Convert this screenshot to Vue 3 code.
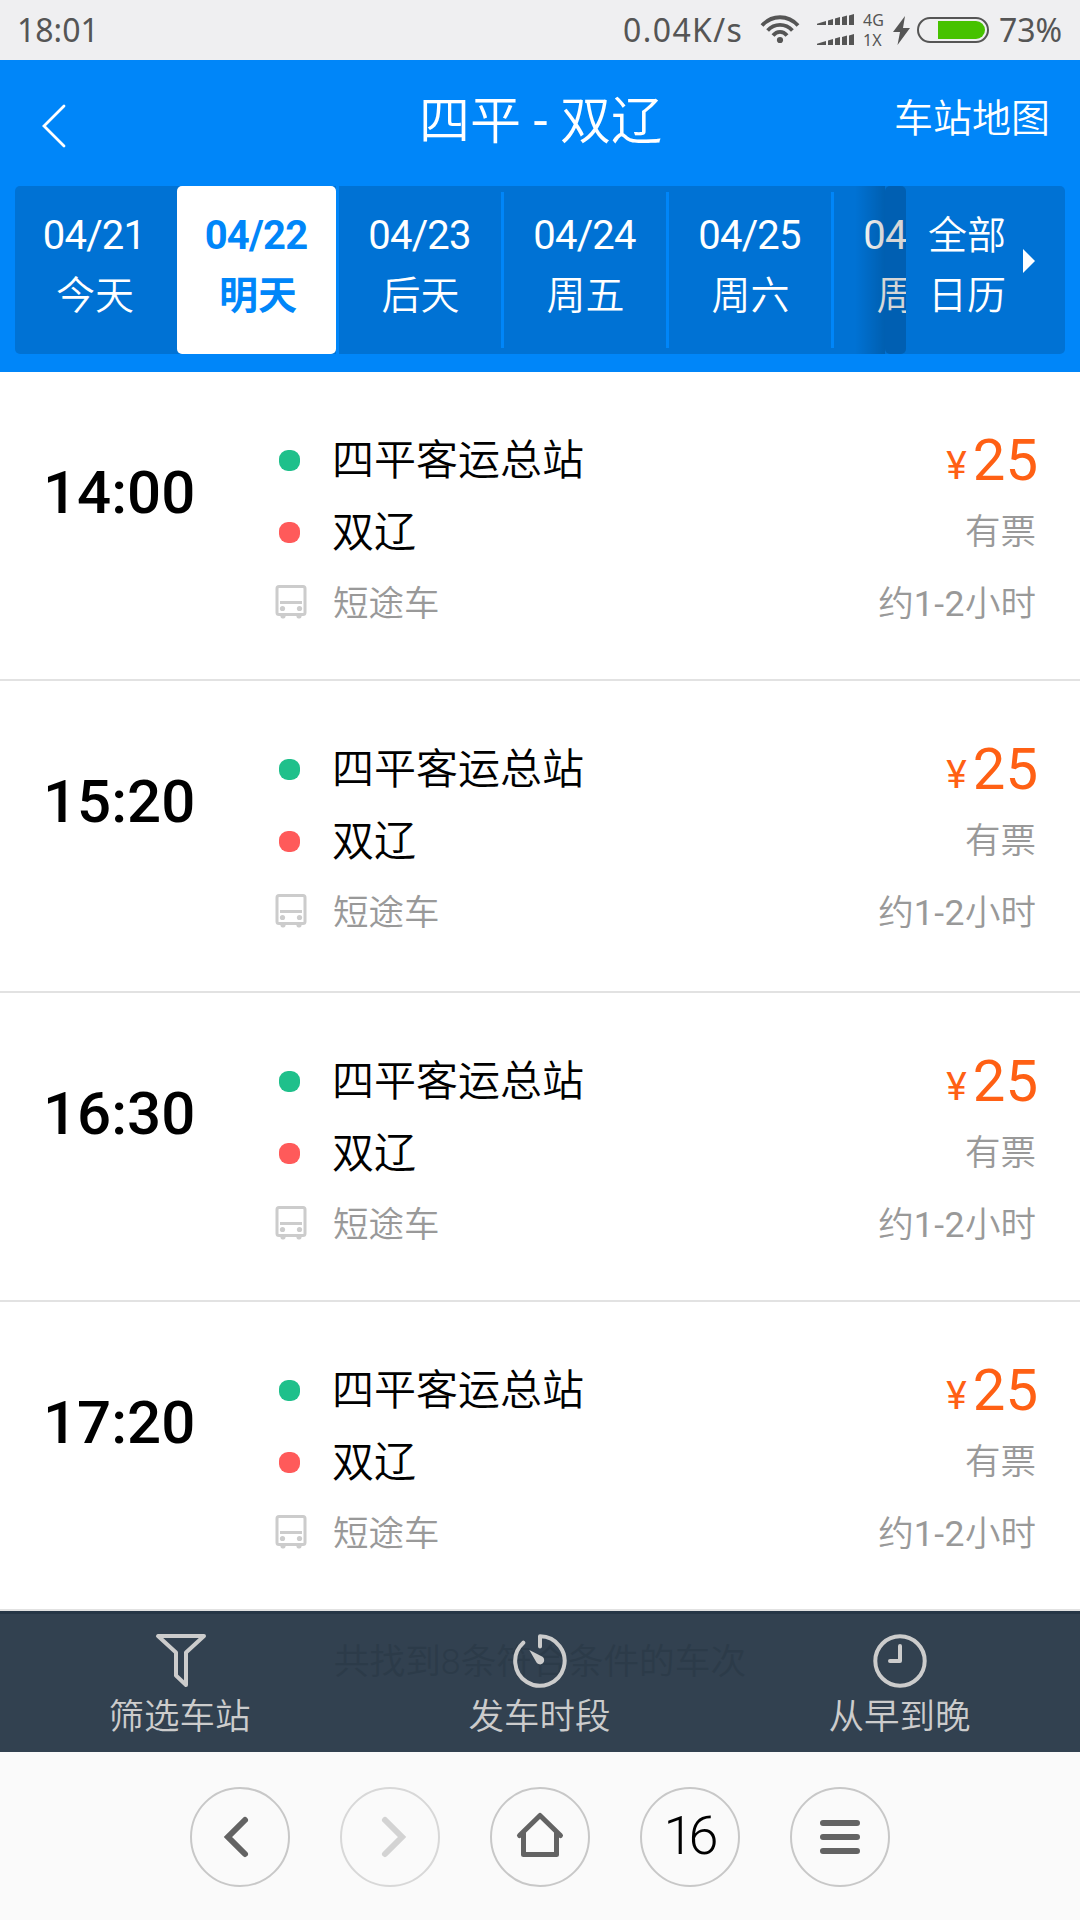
<script setup>
const days = [
  { date: '04/21', name: '今天' },
  { date: '04/22', name: '明天', active: true },
  { date: '04/23', name: '后天' },
  { date: '04/24', name: '周五' },
  { date: '04/25', name: '周六' },
  { date: '04/26', name: '周日' },
]
const trips = [
  { time: '14:00' },
  { time: '15:20', tall: true },
  { time: '16:30' },
  { time: '17:20' },
]
</script>

<template>
  <div class="screen">
    <div class="status">
      <span class="clock">18:01</span>
      <span class="speed">0.04K/s</span>
      <svg class="wifi" width="40" height="30" viewBox="0 0 40 30" fill="none" stroke="#555" stroke-width="3.8">
        <path d="M2 10.5C12-.5 28-.5 38 10.5" />
        <path d="M7.600 15.500C14.500 8 25.500 8 32.400 15.500" />
        <path d="M13 20.500C17 15.700 23 15.700 27 20.500" />
        <circle cx="20" cy="25" r="3.100" fill="#555" stroke="none" />
      </svg>
      <svg class="signal" width="38" height="32" viewBox="0 0 38 32" fill="#555">
        <path d="M0 9.700L9 7V11H0Z" />
        <path d="M11 6.500L16 5V11H11Z" />
        <path d="M18 4.500L23 3V11H18Z" />
        <path d="M25 3L30 1.500V11H25Z" />
        <path d="M32 1.500L37 0V11H32Z" />
        <g transform="translate(0 20)">
          <path d="M0 9.700L9 7V11H0Z" />
          <path d="M11 6.500L16 5V11H11Z" />
          <path d="M18 4.500L23 3V11H18Z" />
          <path d="M25 3L30 1.500V11H25Z" />
          <path d="M32 1.500L37 0V11H32Z" />
        </g>
      </svg>
      <span class="net"><span>4G</span><span>1X</span></span>
      <svg class="bolt" width="17" height="29" viewBox="0 0 17 29" fill="#555">
        <path d="M12 0L0 16H7L4.500 29L17 12H10Z" />
      </svg>
      <svg class="battery" width="72" height="26" viewBox="0 0 72 26">
        <rect x="1" y="1" width="70" height="24" rx="12" fill="none" stroke="#555" stroke-width="2" />
        <path d="M21 4H59A9 9 0 0 1 59 22H21Z" fill="#46c200" />
      </svg>
      <span class="percent">73%</span>
    </div>

    <header class="header">
      <div class="titlebar">
        <svg class="back" width="26" height="44" viewBox="0 0 26 44" fill="none" stroke="#fff" stroke-width="2.800" stroke-linecap="round">
          <path d="M23 2L3 22L23 42" />
        </svg>
        <h1>四平 <span class="dash">-</span> 双辽</h1>
        <span class="map">车站地图</span>
      </div>
      <div class="dates">
        <div class="scroller">
          <div v-for="d in days" :key="d.date" class="day" :class="{ active: d.active }">
            <span class="num">{{ d.date }}</span>
            <span class="name">{{ d.name }}</span>
          </div>
          <div class="shade"></div>
          <div class="edge"></div>
        </div>
        <div class="calendar">
          <span class="all"><span>全部</span><span>日历</span></span>
          <i class="arrow"></i>
        </div>
      </div>
    </header>

    <main class="list">
      <section v-for="t in trips" :key="t.time" class="trip" :class="{ tall: t.tall }">
        <div class="time">{{ t.time }}</div>
        <div class="route">
          <div class="line"><i class="dot from"></i><span class="station">四平客运总站</span></div>
          <div class="line"><i class="dot to"></i><span class="station">双辽</span></div>
          <div class="line">
            <svg class="bus" width="32" height="35" viewBox="0 0 32 35">
              <rect x="2" y="1.500" width="28" height="28" rx="2" fill="none" stroke="#ccc" stroke-width="3" />
              <rect x="5" y="16" width="22" height="3" fill="#ccc" />
              <circle cx="7.500" cy="23.500" r="2.600" fill="#ccc" />
              <circle cx="24.500" cy="23.500" r="2.600" fill="#ccc" />
              <rect x="5.500" y="29" width="5" height="4.500" rx="2" fill="#ccc" />
              <rect x="21.500" y="29" width="5" height="4.500" rx="2" fill="#ccc" />
            </svg>
            <span class="kind">短途车</span>
          </div>
        </div>
        <div class="info">
          <div class="price"><span class="yen">¥</span>25</div>
          <div class="grey">有票</div>
          <div class="grey">约<span class="digits">1-2</span>小时</div>
        </div>
      </section>
    </main>

    <div class="filters">
      <div class="found">共找到8条符合条件的车次</div>
      <div class="filter">
        <svg width="54" height="54" viewBox="0 0 54 54" fill="none" stroke="#ccc" stroke-width="4" stroke-linejoin="round">
          <path d="M5 2H51L33 18.500V51L23 41.500V18.500Z" />
        </svg>
        <span>筛选车站</span>
      </div>
      <div class="filter">
        <svg width="54" height="54" viewBox="0 0 54 54" fill="none" stroke="#ccc" stroke-width="4">
          <path d="M10.300 8.700A24.700 24.700 0 1 0 27 2.300V12.500" stroke-linecap="round" stroke-linejoin="round" />
          <path d="M16.300 16L29.500 22.800A4.200 4.200 0 1 1 23.500 28.500Z" fill="#ccc" stroke="none" />
        </svg>
        <span>发车时段</span>
      </div>
      <div class="filter">
        <svg width="54" height="54" viewBox="0 0 54 54" fill="none" stroke="#ccc" stroke-width="4">
          <circle cx="27" cy="27" r="24.700" />
          <path d="M27 12V27H17" stroke-linecap="round" stroke-linejoin="round" />
        </svg>
        <span>从早到晚</span>
      </div>
    </div>

    <nav class="browser">
      <div class="btn">
        <svg width="100" height="100" viewBox="0 0 100 100" fill="none" stroke="#636363" stroke-width="6" stroke-linecap="round">
          <path d="M55 33L38 50L55 67" />
        </svg>
      </div>
      <div class="btn off">
        <svg width="100" height="100" viewBox="0 0 100 100" fill="none" stroke="#d3d3d3" stroke-width="6" stroke-linecap="round">
          <path d="M45 33L62 50L45 67" />
        </svg>
      </div>
      <div class="btn">
        <svg width="100" height="100" viewBox="0 0 100 100" fill="none" stroke="#636363" stroke-width="5" stroke-linecap="round" stroke-linejoin="round">
          <path d="M29.500 48.500L50 28.500L70.500 48.500M33.500 45V67.500H66.500V45" />
        </svg>
      </div>
      <div class="btn"><span class="tabs">16</span></div>
      <div class="btn">
        <svg width="100" height="100" viewBox="0 0 100 100" fill="none" stroke="#636363" stroke-width="6" stroke-linecap="round">
          <path d="M33 36H67M33 50H67M33 64H67" />
        </svg>
      </div>
    </nav>
  </div>
</template>

<style>
body { margin: 0; }
</style>

<style scoped>
.screen {
  width: 1080px;
  height: 1920px;
  display: flex;
  flex-direction: column;
  overflow: hidden;
  background: #fff;
  font-family: Roboto, "Noto Sans CJK SC", sans-serif;
  font-weight: 350;
}
.status {
  height: 60px;
  flex: none;
  display: flex;
  align-items: center;
  background: #efeff1;
  color: #555;
  font-family: "Noto Sans", sans-serif;
  font-size: 32px;
  font-weight: 400;
  line-height: 60px;
}
.clock { width: 606px; padding-left: 17px; flex: none; }
.speed { width: 137px; flex: none; letter-spacing: 1.4px; }
.signal { margin-left: 17px; }
.net {
  display: flex;
  flex-direction: column;
  width: 30px;
  margin-left: 8px;
  font-size: 16px;
  line-height: 20px;
}
.battery { margin-left: 7px; }
.percent { margin-left: 10px; }

.header { height: 312px; flex: none; background: #0086f9; color: #fff; }
.titlebar {
  height: 126px;
  display: flex;
  align-items: center;
}
.back { margin: 6px 0 0 41px; flex: none; }
h1 {
  flex: 1;
  margin: 0 0 13px 120px;
  text-align: center;
  font-size: 51px;
  font-weight: 350;
}
.dash { font-weight: 400; }
.map { margin: 0 30px 16px 0; font-size: 39px; }
.dates {
  height: 168px;
  margin: 0 15px;
  display: flex;
  border-radius: 5px;
  overflow: hidden;
  background: #0072d4;
}
.scroller {
  position: relative;
  width: 891px;
  flex: none;
  display: flex;
  overflow: hidden;
}
.day {
  width: 162px;
  margin: 6px 0;
  border-right: 3px solid #0086f9;
  flex: none;
  display: flex;
  flex-direction: column;
  align-items: center;
  font-weight: 400;
}
.day:first-child { width: 159px; border-right-color: transparent; }
.num { margin-top: 14px; font-size: 40px; line-height: 60px; letter-spacing: -0.8px; padding-right: 1px; }
.name { font-size: 39px; line-height: 60px; font-weight: 350; padding-left: 1px; }
.day.active {
  width: 159px;
  margin: 0;
  color: #0086f9;
  position: relative;
  z-index: 0;
}
.day.active::before {
  content: "";
  position: absolute;
  z-index: -1;
  inset: 0;
  background: #fff;
  border-radius: 5px;
}
.active .num { margin-top: 20px; font-weight: 700; }
.active .name { font-weight: 700; padding-left: 3px; }
.shade {
  position: absolute;
  left: 840px;
  top: 0;
  width: 30px;
  height: 168px;
  background: linear-gradient(to right, rgba(0, 0, 0, 0), rgba(0, 0, 0, 0.17));
}
.edge {
  position: absolute;
  left: 870px;
  top: 0;
  width: 21px;
  height: 168px;
  border-radius: 5px;
  background: rgba(0, 0, 0, 0.16);
}
.calendar { display: flex; align-items: center; padding-left: 22px; }
.all {
  display: flex;
  flex-direction: column;
  font-size: 39px;
  line-height: 60px;
  height: 128px;
}
.arrow {
  margin: -18px 0 0 17px;
  border-left: 12px solid #fff;
  border-top: 12px solid transparent;
  border-bottom: 12px solid transparent;
}

.list { height: 1239px; flex: none; }
.trip {
  box-sizing: border-box;
  height: 309px;
  display: flex;
  border-bottom: 2px solid #e2e2e2;
}
.trip.tall { height: 312px; }
.time {
  width: 230px;
  padding: 86px 0 0 43px;
  font-size: 60px;
  line-height: 70px;
  font-weight: 500;
  color: #000;
}
.route { width: 400px; padding-top: 52px; }
.line { height: 72px; display: flex; align-items: center; }
.dot { width: 21px; height: 21px; border-radius: 9px; margin: 0 32px 0 6px; }
.from { background: #1fc08b; }
.to { background: #ff5a5a; }
.bus { margin: 0 26px 3px 2px; }
.station { font-size: 42px; color: #000; line-height: 72px; padding-top: 2px; }
.kind { font-size: 35.500px; color: #999; line-height: 72px; }
.info { flex: 1; padding: 52px 44px 0 0; text-align: right; }
.price { height: 72px; margin-right: -2px; line-height: 72px; font-size: 58px; font-weight: 400; color: #ff6014; }
.yen { font-size: 39px; margin-right: 6px; position: relative; top: -1px; }
.grey { height: 72px; line-height: 72px; font-size: 35.500px; color: #999; }
.digits { font-weight: 400; letter-spacing: 0.5px; }

.filters {
  position: relative;
  box-sizing: border-box;
  height: 141px;
  flex: none;
  display: flex;
  background: #324150;
  border-top: 3px solid #263646;
}
.found {
  position: absolute;
  left: 0;
  right: 0;
  top: 18px;
  text-align: center;
  font-size: 35.700px;
  line-height: 60px;
  color: #2c3b49;
}
.filter {
  position: relative;
  width: 360px;
  padding-top: 20px;
  display: flex;
  flex-direction: column;
  align-items: center;
  color: #ccc;
  font-size: 35.500px;
  line-height: 50px;
}
.filter span { margin-top: 4px; padding-right: 1px; }

.browser {
  flex: 1;
  display: flex;
  justify-content: center;
  gap: 50px;
  padding-top: 35px;
  background: #fafafa;
}
.btn {
  box-sizing: border-box;
  width: 100px;
  height: 100px;
  border: 2px solid #c8c8c8;
  border-radius: 50%;
  display: flex;
  align-items: center;
  justify-content: center;
}
.btn.off { border-color: #d8d8d8; }
.btn svg { flex: none; }
.tabs { font-size: 54px; font-weight: 350; color: #000; letter-spacing: -5px; padding: 0 3px 4px 0; }
</style>
